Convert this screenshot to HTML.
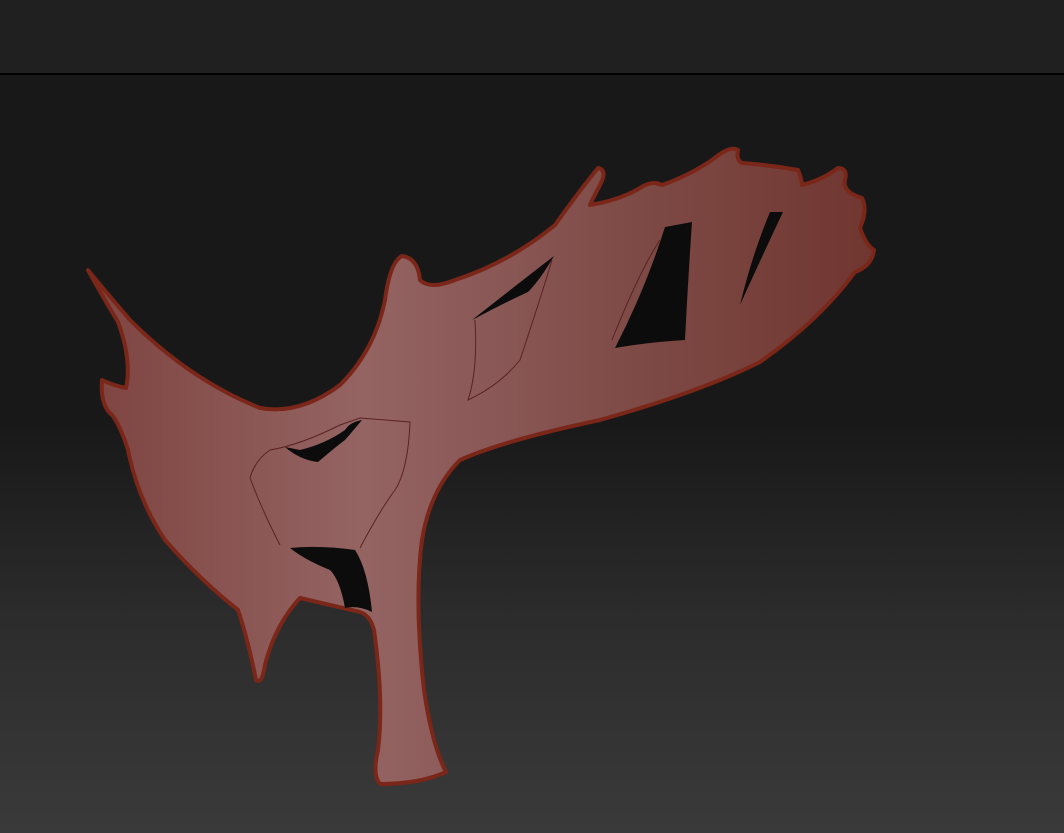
<!DOCTYPE html>
<html><head><meta charset="utf-8"><style>
html,body{margin:0;padding:0;width:1064px;height:833px;overflow:hidden}
body{background:linear-gradient(#181818 0px,#181818 73px,#181818 420px,#2c2c2c 620px,#3a3a3a 833px);position:relative}
.top{position:absolute;left:0;top:0;width:1064px;height:73px;background:#202020;border-bottom:2px solid #000}
svg{position:absolute;left:0;top:0}
</style></head><body>
<div class="top"></div>
<svg width="1064" height="833" viewBox="0 0 1064 833">
<defs>
<linearGradient id="g" x1="0" y1="0" x2="1" y2="0">
<stop offset="0" stop-color="#7e4440"/>
<stop offset="0.35" stop-color="#946463"/>
<stop offset="0.7" stop-color="#7e4a46"/>
<stop offset="1" stop-color="#703630"/>
</linearGradient>
<filter id="b"><feGaussianBlur stdDeviation="1"/></filter>
</defs>
<path fill="url(#g)" stroke="#7a2618" stroke-width="4" stroke-linejoin="round" d="
M88,270 Q100,285 130,320 Q190,380 260,408 Q300,415 340,385 Q375,350 385,300 Q390,262 402,256 Q418,258 420,280 Q430,290 455,280 Q510,262 555,225 Q580,190 598,168 Q608,170 600,185 Q592,200 590,205 Q620,200 640,188 Q652,180 662,185 Q690,175 712,160 Q730,145 738,150 Q736,160 742,163 Q770,165 798,170 Q802,180 802,185 Q822,180 838,168 Q848,168 845,180 Q842,192 862,198 Q868,210 860,228 Q866,245 874,250 Q872,266 855,272 Q820,320 760,362 Q700,392 600,420 Q505,440 460,460 Q430,490 422,540 Q414,600 424,690 Q432,745 446,772 Q420,784 380,784 Q372,775 378,750 Q384,700 374,630 Q370,615 360,612 Q330,605 300,598 Q275,625 265,665 Q262,685 256,680 Q248,640 238,610 Q200,580 165,540 Q138,500 128,450 Q120,425 112,415 Q100,405 102,380 Q112,385 126,388 Q132,360 118,322 Q100,292 88,270 Z"/>
<g fill="#0c0c0c">
<path d="M472,320 Q510,290 554,256 Q540,280 528,292 Q500,305 476,318 Z"/>
<path d="M615,348 Q645,290 665,227 L692,222 Q688,280 685,340 Q650,342 615,348 Z"/>
<path d="M740,305 Q752,255 770,212 L783,212 Q765,250 740,305 Z"/>
<path d="M285,447 Q300,460 318,462 Q338,445 345,440 Q352,432 362,420 Q350,422 345,430 Q325,444 300,450 Z"/>
<path d="M290,548 Q320,545 355,550 Q368,570 372,612 Q358,605 345,608 Q340,580 330,570 Q305,560 290,548 Z"/>
</g>
<g fill="none" stroke="#5a2222" stroke-width="1">
<path d="M475,320 Q478,370 468,400 Q500,385 520,360 Q540,300 552,260"/>
<path d="M250,478 Q255,460 270,450 Q300,445 340,425 L360,418 L410,422 Q408,470 395,490 Q380,510 360,548 M250,478 Q262,510 280,545"/>
<path d="M612,340 Q640,270 660,240"/>
</g>
</svg>
</body></html>
